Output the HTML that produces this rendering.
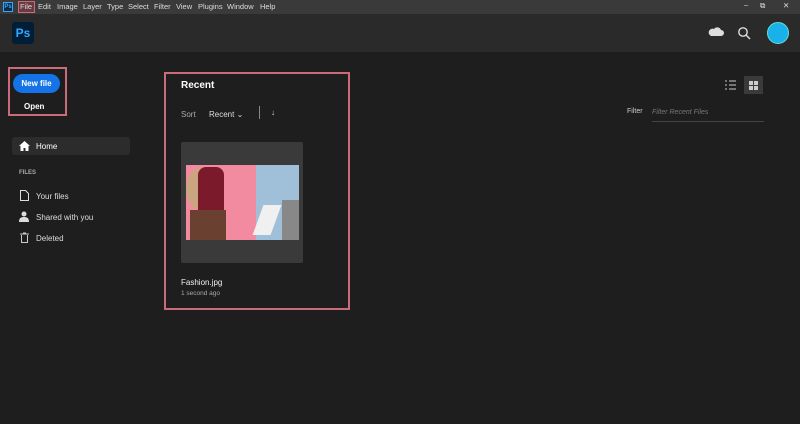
<!DOCTYPE html>
<html><head><style>
*{margin:0;padding:0;box-sizing:border-box}
body{width:800px;height:424px;background:#1e1e1e;font-family:"Liberation Sans",sans-serif;color:#ddd;position:relative;overflow:hidden;font-size:8px}
.a{position:absolute}
#menu{left:0;top:0;width:800px;height:14px;background:#3a3a3a}
#menu span{position:absolute;top:2px;font-size:7.5px;color:#ddd}
#hdr{left:0;top:14px;width:800px;height:38px;background:#2a2a2a}
.box{border:2px solid #c96b78}
</style></head><body>
<div id="menu" class="a">
<div class="a" style="left:3px;top:2px;width:10px;height:10px;background:#0a2a4a;border:1px solid #31a8ff;color:#31a8ff;font-size:6px;font-weight:bold;line-height:8px;text-align:center">Ps</div>
<div class="a" style="left:18px;top:1px;width:17px;height:12px;border:1px solid #c96b78;background:#6a3a40"></div>
<span style="left:20px">File</span><span style="left:38px">Edit</span><span style="left:57px">Image</span><span style="left:83px">Layer</span><span style="left:107px">Type</span><span style="left:128px">Select</span><span style="left:154px">Filter</span><span style="left:176px">View</span><span style="left:198px">Plugins</span><span style="left:227px">Window</span><span style="left:260px">Help</span>
<span style="left:744px;top:0">–</span><span style="left:760px;top:1px">⧉</span><span style="left:783px;top:1px">✕</span>
</div>
<div id="hdr" class="a">
<div class="a" style="left:12px;top:8px;width:22px;height:22px;background:#001e36;border-radius:3px;color:#31a8ff;font-weight:bold;font-size:12px;line-height:22px;text-align:center">Ps</div>
<svg class="a" style="left:708px;top:12px" width="16" height="12"><path d="M3 10h10a3 3 0 0 0 0-6 4 4 0 0 0-7-1 3 3 0 0 0-3 7z" fill="#ddd"/></svg>
<svg class="a" style="left:737px;top:12px" width="14" height="14"><circle cx="6" cy="6" r="4.2" fill="none" stroke="#ddd" stroke-width="1.4"/><path d="M9 9l4 4" stroke="#ddd" stroke-width="1.4"/></svg>
<div class="a" style="left:767px;top:8px;width:22px;height:22px;border-radius:50%;background:#1ab0ea;border:1px solid #6dd"></div>
</div>
<div class="a box" style="left:8px;top:67px;width:59px;height:49px"></div>
<div class="a" style="left:13px;top:74px;width:47px;height:19px;background:#1473e6;border-radius:10px;color:#fff;font-weight:bold;font-size:8px;line-height:19px;text-align:center">New file</div>
<div class="a" style="left:24px;top:102px;color:#fff;font-weight:bold;font-size:8px">Open</div>
<div class="a" style="left:12px;top:137px;width:118px;height:18px;background:#2c2c2c;border-radius:3px"></div>
<svg class="a" style="left:19px;top:141px" width="11" height="10"><path d="M5.5 0L0 5h1.5v5h3V7h2v3h3V5H11z" fill="#fff"/></svg>
<div class="a" style="left:36px;top:142px;color:#fff;font-size:8px">Home</div>
<div class="a" style="left:19px;top:170px;color:#aaa;font-size:6px;font-weight:bold">FILES</div>
<svg class="a" style="left:20px;top:190px" width="9" height="11"><path d="M.5.5h5l3 3v7h-8z" fill="none" stroke="#ddd"/></svg>
<div class="a" style="left:36px;top:192px;font-size:8px">Your files</div>
<svg class="a" style="left:19px;top:211px" width="11" height="11"><circle cx="5" cy="3" r="2.5" fill="#ddd"/><path d="M0 11c0-4 2-5 5-5s5 1 5 5z" fill="#ddd"/></svg>
<div class="a" style="left:36px;top:213px;font-size:8px">Shared with you</div>
<svg class="a" style="left:20px;top:232px" width="9" height="11"><path d="M0 2h9M3 1h3M1.5 3v7.5h6V3" fill="none" stroke="#ccc"/></svg>
<div class="a" style="left:36px;top:234px;font-size:8px">Deleted</div>
<div class="a box" style="left:164px;top:72px;width:186px;height:238px"></div>
<div class="a" style="left:181px;top:80px;color:#fff;font-weight:bold;font-size:10px">Recent</div>
<div class="a" style="left:181px;top:110px;color:#aaa;font-size:8px">Sort</div>
<div class="a" style="left:209px;top:110px;font-size:8px">Recent ⌄</div>
<div class="a" style="left:259px;top:106px;width:1px;height:13px;background:#888"></div>
<div class="a" style="left:271px;top:108px;font-size:8px">↓</div>
<div class="a" style="left:181px;top:142px;width:122px;height:121px;background:#3a3a3a;border-radius:2px"></div>
<div class="a" style="left:186px;top:165px;width:113px;height:75px;background:#f28aa0;overflow:hidden">
<div class="a" style="left:0;top:3px;width:30px;height:42px;border-radius:50%;background:#c9a67f"></div>
<div class="a" style="left:12px;top:2px;width:26px;height:60px;background:#7a1a2a;border-radius:8px"></div>
<div class="a" style="left:4px;top:45px;width:36px;height:30px;background:#6a4030"></div>
<div class="a" style="left:70px;top:0;width:43px;height:75px;background:#9fc0d8"></div>
<div class="a" style="left:96px;top:35px;width:17px;height:40px;background:#888"></div>
<div class="a" style="left:72px;top:40px;width:18px;height:30px;background:#f0f0f0;transform:skewX(-20deg)"></div>
</div>
<div class="a" style="left:181px;top:278px;font-size:8px;color:#eee">Fashion.jpg</div>
<div class="a" style="left:181px;top:290px;font-size:6.5px;color:#aaa">1 second ago</div>
<svg class="a" style="left:725px;top:80px" width="11" height="10"><path d="M0 1h2M0 5h2M0 9h2M4 1h7M4 5h7M4 9h7" stroke="#ccc"/></svg>
<div class="a" style="left:744px;top:76px;width:19px;height:18px;background:#3a3a3a"></div>
<svg class="a" style="left:749px;top:81px" width="9" height="9"><rect width="4" height="4" fill="#ccc"/><rect x="5" width="4" height="4" fill="#ccc"/><rect y="5" width="4" height="4" fill="#ccc"/><rect x="5" y="5" width="4" height="4" fill="#ccc"/></svg>
<div class="a" style="left:627px;top:108px;font-size:7px;color:#ccc">Filter</div>
<div class="a" style="left:652px;top:109px;font-size:7px;color:#777;font-style:italic">Filter Recent Files</div>
<div class="a" style="left:652px;top:121px;width:112px;height:1px;background:#444"></div>
</body></html>
